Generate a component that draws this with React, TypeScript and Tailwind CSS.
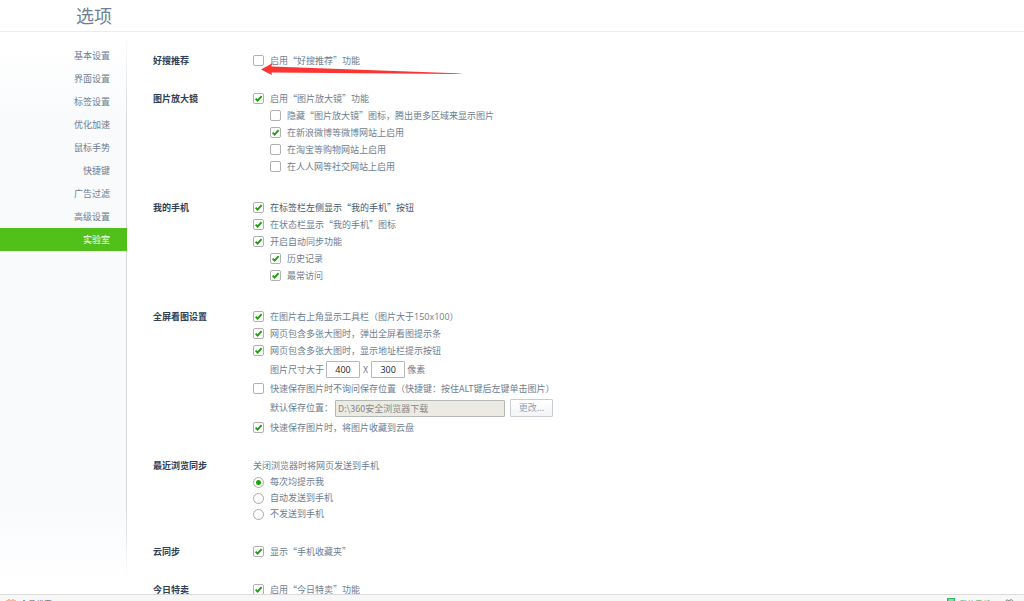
import React, { useState } from 'react';

const navItems = ['基本设置', '界面设置', '标签设置', '优化加速', '鼠标手势', '快捷键', '广告过滤', '高级设置', '实验室'];

function Check({ label, checked = false, nested = false, dark = false }: { label: React.ReactNode; checked?: boolean; nested?: boolean; dark?: boolean }) {
  const [on, setOn] = useState(checked);
  return (
    <label className={`flex h-[17px] items-center gap-[6px] whitespace-nowrap ${nested ? 'ml-[17px]' : ''} ${dark ? 'text-[#47566a]' : ''}`}>
      <span className="grid h-[11px] w-[11px] shrink-0 place-items-center">
        <input
          type="checkbox"
          checked={on}
          onChange={e => setOn(e.target.checked)}
          className="col-start-1 row-start-1 h-[11px] w-[11px] appearance-none rounded-[2px] border border-[#b0b0b0] bg-white"
        />
        {on && (
          <svg viewBox="0 0 11 11" className="pointer-events-none col-start-1 row-start-1 h-[11px] w-[11px]">
            <path d="M2.6 5.6 4.6 7.6 8.6 3.2" fill="none" stroke="#1d9f0c" strokeWidth="1.9" />
          </svg>
        )}
      </span>
      <span>{label}</span>
    </label>
  );
}

function Section({ title, className = '', children }: { title: string; className?: string; children: React.ReactNode }) {
  return (
    <section className={`flex ${className}`}>
      <h2 className="w-[100px] shrink-0 leading-[17px] font-bold text-[#2f4056]">{title}</h2>
      <div>{children}</div>
    </section>
  );
}

export default function App() {
  const [active, setActive] = useState('实验室');
  const [width, setWidth] = useState('400');
  const [height, setHeight] = useState('300');
  const [send, setSend] = useState('每次均提示我');

  return (
    <div className="flex h-screen flex-col overflow-hidden bg-white font-['Noto_Sans_CJK_SC','Open_Sans',sans-serif] text-[9px] text-[#6d7d90]" lang="zh-CN">
      <header className="flex h-8 shrink-0 items-start border-b border-[#ececec] pt-[3px] pl-[76px]">
        <h1 className="text-[18px] leading-6 font-normal text-[#6f7f92]">选项</h1>
      </header>

      <div className="flex min-h-0 flex-1">
        <nav className="flex w-[127px] shrink-0 bg-[linear-gradient(#fff_2%,#f8fafc_16%,#f8fafc_84%,#fff_98%)]">
          <ul className="flex-1 pt-3">
            {navItems.map(item => (
              <li key={item}>
                <a
                  href="#"
                  onClick={e => { e.preventDefault(); setActive(item); }}
                  className={`block text-right leading-[23px] ${active === item ? 'relative -mr-px bg-[#52c01a] pr-[17px] text-white' : 'pr-4'}`}
                >
                  {item}
                </a>
              </li>
            ))}
          </ul>
          <div className="w-px bg-[linear-gradient(#fff,#d3d8dd_16%,#d3d8dd_84%,#fff_98%)]"></div>
        </nav>

        <main className="flex min-w-0 flex-1 flex-col gap-[21px] overflow-hidden pt-5 pl-[26px]">
          <Section title="好搜推荐">
            <div className="relative">
              <Check label="启用“好搜推荐”功能" />
              <svg viewBox="0 0 202 12" className="pointer-events-none absolute top-[11px] left-2 h-3 w-[202px]">
                <path d="M0 6.5 11 .5 10.5 3.5 202 10.5 195 11 10.5 9.5 11 12Z" fill="#fb3434" />
              </svg>
            </div>
          </Section>

          <Section title="图片放大镜" className="pb-[3px]">
            <Check label="启用“图片放大镜”功能" checked />
            <Check label="隐藏“图片放大镜”图标，腾出更多区域来显示图片" nested />
            <Check label="在新浪微博等微博网站上启用" checked nested />
            <Check label="在淘宝等购物网站上启用" nested />
            <Check label="在人人网等社交网站上启用" nested />
          </Section>

          <Section title="我的手机" className="pb-[3px]">
            <Check label="在标签栏左侧显示“我的手机”按钮" checked dark />
            <Check label="在状态栏显示“我的手机”图标" checked />
            <Check label="开启自动同步功能" checked />
            <Check label="历史记录" checked nested />
            <Check label="最常访问" checked nested />
          </Section>

          <Section title="全屏看图设置">
            <Check label={<>在图片右上角显示工具栏（图片大于<span className="font-['Open_Sans',sans-serif]">150x100</span>）</>} checked />
            <Check label="网页包含多张大图时，弹出全屏看图提示条" checked />
            <Check label="网页包含多张大图时，显示地址栏提示按钮" checked />
            <div className="ml-[17px] flex h-[21px] items-center gap-[2px]">
              <label htmlFor="min-width">图片尺寸大于</label>
              <input
                id="min-width"
                value={width}
                onChange={e => setWidth(e.target.value)}
                className="h-[17px] w-[34px] rounded-[1px] border border-[#b4b8bd] text-center font-['Open_Sans',sans-serif] text-[#222]"
              />
              <label htmlFor="min-height" className="px-px">X</label>
              <input
                id="min-height"
                value={height}
                onChange={e => setHeight(e.target.value)}
                className="h-[17px] w-[34px] rounded-[1px] border border-[#b4b8bd] text-center font-['Open_Sans',sans-serif] text-[#222]"
              />
              <span>像素</span>
            </div>
            <Check label="快速保存图片时不询问保存位置（快捷键：按住ALT键后左键单击图片）" />
            <div className="ml-[17px] flex h-[22px] items-center">
              <label htmlFor="save-path" className="w-[65px]">默认保存位置：</label>
              <input
                id="save-path"
                disabled
                value="D:\360安全浏览器下载"
                className="h-[17px] w-[170px] rounded-[1px] border border-[#b4b8b4] bg-[#ebebe4] px-[2px] text-[#85888a]"
              />
              <button className="ml-[5px] h-[18px] w-[43px] rounded-[1px] border border-[#c9cdd1] bg-linear-to-b from-white to-[#f3f4f5] text-[#94a1b1]">更改...</button>
            </div>
            <Check label="快速保存图片时，将图片收藏到云盘" checked />
          </Section>

          <Section title="最近浏览同步">
            <p className="leading-[17px]">关闭浏览器时将网页发送到手机</p>
            {['每次均提示我', '自动发送到手机', '不发送到手机'].map(option => (
              <label key={option} className="flex h-4 items-center gap-[6px]">
                <span className="grid h-[11px] w-[11px] place-items-center">
                  <input
                    type="radio"
                    name="send"
                    checked={send === option}
                    onChange={() => setSend(option)}
                    className="col-start-1 row-start-1 h-[11px] w-[11px] appearance-none rounded-full border border-[#a9a9a9] bg-white"
                  />
                  {send === option && <span className="pointer-events-none col-start-1 row-start-1 h-[5px] w-[5px] rounded-full bg-[#1fa50c]"></span>}
                </span>
                {option}
              </label>
            ))}
          </Section>

          <Section title="云同步">
            <Check label="显示“手机收藏夹”" checked />
          </Section>

          <Section title="今日特卖">
            <Check label="启用“今日特卖”功能" checked />
          </Section>
        </main>
      </div>

      {/* status bar, mostly below the fold */}
      <footer className="-mb-[11px] flex h-[18px] shrink-0 items-center border-t border-[#dcdcdc] bg-[#f7f7f7] px-[6px] text-[8px] text-[#555]">
        <svg viewBox="0 0 10 10" className="h-[10px] w-[10px]" fill="#f9b796">
          <path d="M2 0h2v1h2V0h2v1h2v9H0V1h2Z" />
        </svg>
        <span className="ml-1 flex-1">今日优惠</span>
        <svg viewBox="0 0 8 12" className="h-3 w-2" fill="none" stroke="#2fb85f" strokeWidth="1.4">
          <path d="M.7.7h6.6v10.6H.7zM.5 3.2h7" />
        </svg>
        <span className="ml-1 text-[#2fb85f]">我的手机</span>
        <svg viewBox="0 0 10 10" className="mr-1 ml-[13px] h-[10px] w-[10px]" fill="none" stroke="#777">
          <path d="M1 4.5C1 1 4 0 5 2 6.500 0 9.500.5 9 3.500 8.500 6 5 9 3 9 1.500 9 1 7 1 4.500ZM2.500 5 7 2" />
        </svg>
      </footer>
    </div>
  );
}
